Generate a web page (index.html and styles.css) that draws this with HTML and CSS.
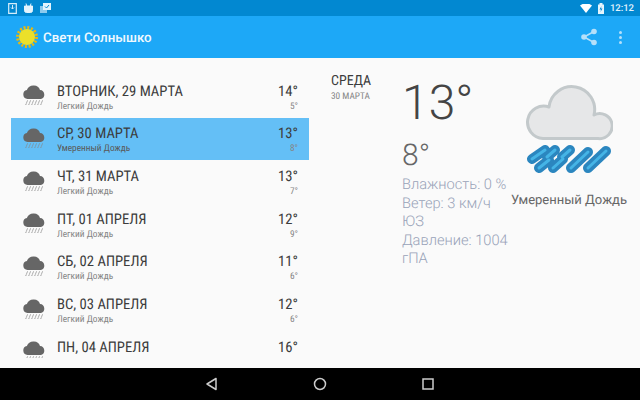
FILE: index.html
```html
<!DOCTYPE html>
<html lang="ru">
<head>
    <meta charset="UTF-8">
    <meta name="viewport" content="width=device-width, initial-scale=1.0">
    <title>Свети Солнышко</title>
    <link rel="stylesheet" href="styles.css">
</head>
<body>
    <svg class="defs" width="0" height="0">
        <symbol id="rain" viewBox="0 0 24 24">
            <path d="M5.500 15a4.500 4.500 0 0 1-.6-8.900A7 7 0 0 1 12 1.500a6.500 6.500 0 0 1 6 4.500A4.600 4.600 0 0 1 19 15z" fill="#666"/>
            <path d="M5.500 16.500l-1.800 4.500M8.500 16.500l-1.800 4.500M11.500 16.500l-1.800 4.500M14.500 16.500l-1.800 4.500M17.500 16.500l-1.800 4.500M20.500 16.500l-1.800 4.500" stroke="#888" stroke-width="1" fill="none" stroke-dasharray="1.300 .7"/>
        </symbol>
    </svg>

    <div class="status">
        <div class="status-left">
            <svg width="9" height="11" viewBox="0 0 9 11"><path d="M.7.700h7.600v9.600H.7z" fill="none" stroke="#d6eefb" stroke-width="1.200"/><path d="M4.500 2v4M3 4.500L4.500 6 6 4.500" stroke="#d6eefb" fill="none"/></svg>
            <svg width="9" height="10" viewBox="0 0 9 10"><path d="M.5 3h8v4.500a2 2 0 0 1-2 2h-4a2 2 0 0 1-2-2zM2 .5l.7 2.500M7 .5L6.300 3" fill="#e4f4fd" stroke="#e4f4fd"/></svg>
            <svg width="11" height="10" viewBox="0 0 11 10"><path d="M0 3h7v7H0z" fill="#8ccbee"/><path d="M3 0h8v7H3z" fill="#e4f4fd"/><path d="M5 3.500l1.500 1.500L9 2" stroke="#0288d1" fill="none"/></svg>
        </div>
        <div class="status-right">
            <svg width="12" height="9" viewBox="0 0 12 9"><path d="M0 1.500a9.500 9.500 0 0 1 12 0L6 9z" fill="#fff"/></svg>
            <svg width="6" height="11" viewBox="0 0 6 11"><path d="M0 1.500h1.500V0h3v1.500H6V11H0z" fill="#e4f4fd"/><path d="M3.500 3L1.500 6.500H3L2.500 9l2-3.500H3z" fill="#0288d1"/></svg>
            <span class="clock">12:12</span>
        </div>
    </div>

    <header class="appbar">
        <svg class="sun" width="22" height="22" viewBox="0 0 22 22">
            <circle cx="11" cy="11" r="9.500" fill="none" stroke="#e9b80e" stroke-width="3" stroke-dasharray="2 1.730"/>
            <circle cx="11" cy="11" r="8" fill="#ebe02a"/>
        </svg>
        <h1 class="title">Свети Солнышко</h1>
        <svg class="share" width="18" height="18" viewBox="0 0 18 18">
            <path d="M14 3.500L4 9l10 5.500" fill="none" stroke="#b5e0fa" stroke-width="1.500"/>
            <circle cx="14" cy="3.500" r="2.800" fill="#b5e0fa"/><circle cx="4" cy="9" r="2.800" fill="#b5e0fa"/><circle cx="14" cy="14.500" r="2.800" fill="#b5e0fa"/>
        </svg>
        <div class="dots"><i></i><i></i><i></i></div>
    </header>

    <main class="content">
        <div class="list">
            <div class="row">
                <svg class="icon"><use href="#rain"/></svg>
                <div class="names"><div class="day">ВТОРНИК, 29 МАРТА</div><div class="desc">Легкий Дождь</div></div>
                <div class="temps"><div class="hi">14°</div><div class="lo">5°</div></div>
            </div>
            <div class="row selected">
                <svg class="icon"><use href="#rain"/></svg>
                <div class="names"><div class="day">СР, 30 МАРТА</div><div class="desc">Умеренный Дождь</div></div>
                <div class="temps"><div class="hi">13°</div><div class="lo">8°</div></div>
            </div>
            <div class="row">
                <svg class="icon"><use href="#rain"/></svg>
                <div class="names"><div class="day">ЧТ, 31 МАРТА</div><div class="desc">Легкий Дождь</div></div>
                <div class="temps"><div class="hi">13°</div><div class="lo">7°</div></div>
            </div>
            <div class="row">
                <svg class="icon"><use href="#rain"/></svg>
                <div class="names"><div class="day">ПТ, 01 АПРЕЛЯ</div><div class="desc">Легкий Дождь</div></div>
                <div class="temps"><div class="hi">12°</div><div class="lo">9°</div></div>
            </div>
            <div class="row">
                <svg class="icon"><use href="#rain"/></svg>
                <div class="names"><div class="day">СБ, 02 АПРЕЛЯ</div><div class="desc">Легкий Дождь</div></div>
                <div class="temps"><div class="hi">11°</div><div class="lo">6°</div></div>
            </div>
            <div class="row">
                <svg class="icon"><use href="#rain"/></svg>
                <div class="names"><div class="day">ВС, 03 АПРЕЛЯ</div><div class="desc">Легкий Дождь</div></div>
                <div class="temps"><div class="hi">12°</div><div class="lo">6°</div></div>
            </div>
            <div class="row">
                <svg class="icon"><use href="#rain"/></svg>
                <div class="names"><div class="day">ПН, 04 АПРЕЛЯ</div><div class="desc"></div></div>
                <div class="temps"><div class="hi">16°</div><div class="lo"></div></div>
            </div>
        </div>

        <section class="detail">
            <div class="date">
                <div class="weekday">СРЕДА</div>
                <div class="month">30 МАРТА</div>
            </div>
            <div class="numbers">
                <div class="big">13°</div>
                <div class="low">8°</div>
                <div class="facts">Влажность: 0 %</div>
                <div class="facts">Ветер: 3 км/ч<br>ЮЗ</div>
                <div class="facts">Давление: 1004<br>гПА</div>
            </div>
            <div class="today">
                <svg class="today-icon" width="88" height="88" viewBox="0 0 88 88">
                    <path d="M18 53.500A16.200 16.200 0 1 1 24 22A22.900 22.900 0 1 1 69 30A12.500 12.500 0 1 1 73 53.500z" fill="#e6e7e8" stroke="#c3c9cb" stroke-width="3" stroke-linejoin="round"/>
                    <g fill="none" stroke-linecap="round">
                        <path d="M7 74l13-9M22 72l8-7M37 72l8-7M14 83l10-8M28 83l10-9M46 83l17-16M63 83l18-17" stroke="#2b86bf" stroke-width="10"/>
                        <path d="M7 74l13-9M22 72l8-7M37 72l8-7M14 83l10-8M28 83l10-9M46 83l17-16M63 83l18-17" stroke="#45b4e6" stroke-width="3"/>
                    </g>
                </svg>
                <div class="today-text">Умеренный Дождь</div>
            </div>
        </section>
    </main>

    <nav class="navbar">
        <svg width="14" height="14" viewBox="0 0 14 14"><path d="M11 1.500v11L2 7z" fill="none" stroke="#ccc" stroke-width="1.500" stroke-linejoin="round"/></svg>
        <svg width="14" height="14" viewBox="0 0 14 14"><circle cx="7" cy="7" r="5.500" fill="none" stroke="#ccc" stroke-width="1.500"/></svg>
        <svg width="14" height="14" viewBox="0 0 14 14"><path d="M2 2h10v10H2z" fill="none" stroke="#ccc" stroke-width="1.500"/></svg>
    </nav>
</body>
</html>
```

FILE: styles.css
```css
* {
    box-sizing: border-box;
}
html, body {
    margin: 0;
    height: 100%;
}
body {
    display: flex;
    flex-direction: column;
    width: 640px;
    height: 400px;
    overflow: hidden;
    background: #fafafa;
    font-family: Roboto, sans-serif;
    text-rendering: geometricPrecision;
}
.defs {
    position: absolute;
}
.status {
    display: flex;
    justify-content: space-between;
    align-items: center;
    height: 16px;
    padding: 0 6px 0 8px;
    background: #0288d1;
}
.status-left, .status-right {
    display: flex;
    align-items: center;
    gap: 6px;
}
.status-left {
    gap: 7px;
}
.clock {
    color: #e4f4fd;
    font-size: 9.500px;
    font-weight: 500;
}
.appbar {
    display: flex;
    align-items: center;
    height: 42px;
    padding: 0 18px 0 16px;
    background: #1da8f7;
}
.title {
    flex: 1;
    margin: 3px 0 0 5px;
    color: #f1f9fe;
    font-size: 13.330px;
    font-weight: 500;
}
.share {
    margin-right: 21px;
}
.dots {
    display: flex;
    flex-direction: column;
    gap: 2px;
}
.dots i {
    width: 3px;
    height: 3px;
    border-radius: 50%;
    background: #b5e0fa;
}
.content {
    flex: 1;
    display: flex;
    min-height: 0;
}
.list {
    width: 298px;
    height: 300px;
    margin-left: 11px;
    padding-top: 17px;
    overflow: hidden;
}
.row {
    display: flex;
    align-items: center;
    height: 42.670px;
    padding: 0 11px;
    font-stretch: condensed;
}
.row.selected {
    background: #64bff6;
}
.icon {
    width: 24px;
    height: 24px;
    flex: none;
}
.names {
    flex: 1;
    margin-left: 11px;
}
.day {
    color: #3c3c3c;
    font-size: 14.670px;
    line-height: 20px;
    padding-top: 1px;
    white-space: nowrap;
}
.desc {
    min-height: 12px;
    color: #858585;
    font-size: 9.330px;
    line-height: 12px;
    white-space: nowrap;
}
.row.selected .desc {
    color: #5a5a5a;
}
.temps {
    text-align: right;
}
.hi {
    color: #3c3c3c;
    font-size: 14.670px;
    line-height: 20px;
    padding-top: 1px;
}
.lo {
    min-height: 12px;
    color: #858585;
    font-size: 9.330px;
    line-height: 12px;
}
.detail {
    flex: 1;
    display: flex;
    padding: 14px 0 0 22px;
}
.date {
    width: 71px;
    font-stretch: condensed;
}
.weekday {
    color: #3c3c3c;
    font-size: 14px;
    line-height: 17px;
    padding-top: 1px;
}
.month {
    color: #858585;
    font-size: 9.330px;
    line-height: 13px;
}
.numbers {
    width: 112px;
    flex: none;
}
.big {
    color: #444;
    font-size: 48px;
    font-weight: 300;
    line-height: 62px;
}
.low {
    color: #666;
    font-size: 30px;
    font-weight: 300;
    line-height: 39px;
    margin-top: 2px;
}
.facts {
    margin-bottom: 1px;
    color: #98a2b8;
    font-size: 14.670px;
    font-weight: 300;
    line-height: 18px;
}
.today {
    margin-left: -10px;
    padding-top: 13px;
    text-align: center;
    width: 130px;
    flex: none;
}
.today-icon {
    display: block;
    margin: 0 auto;
}
.today-text {
    margin-top: 20px;
    color: #666;
    font-size: 13px;
    white-space: nowrap;
}
.navbar {
    display: flex;
    justify-content: center;
    align-items: center;
    gap: 94px;
    height: 32px;
    background: #000;
}
```
